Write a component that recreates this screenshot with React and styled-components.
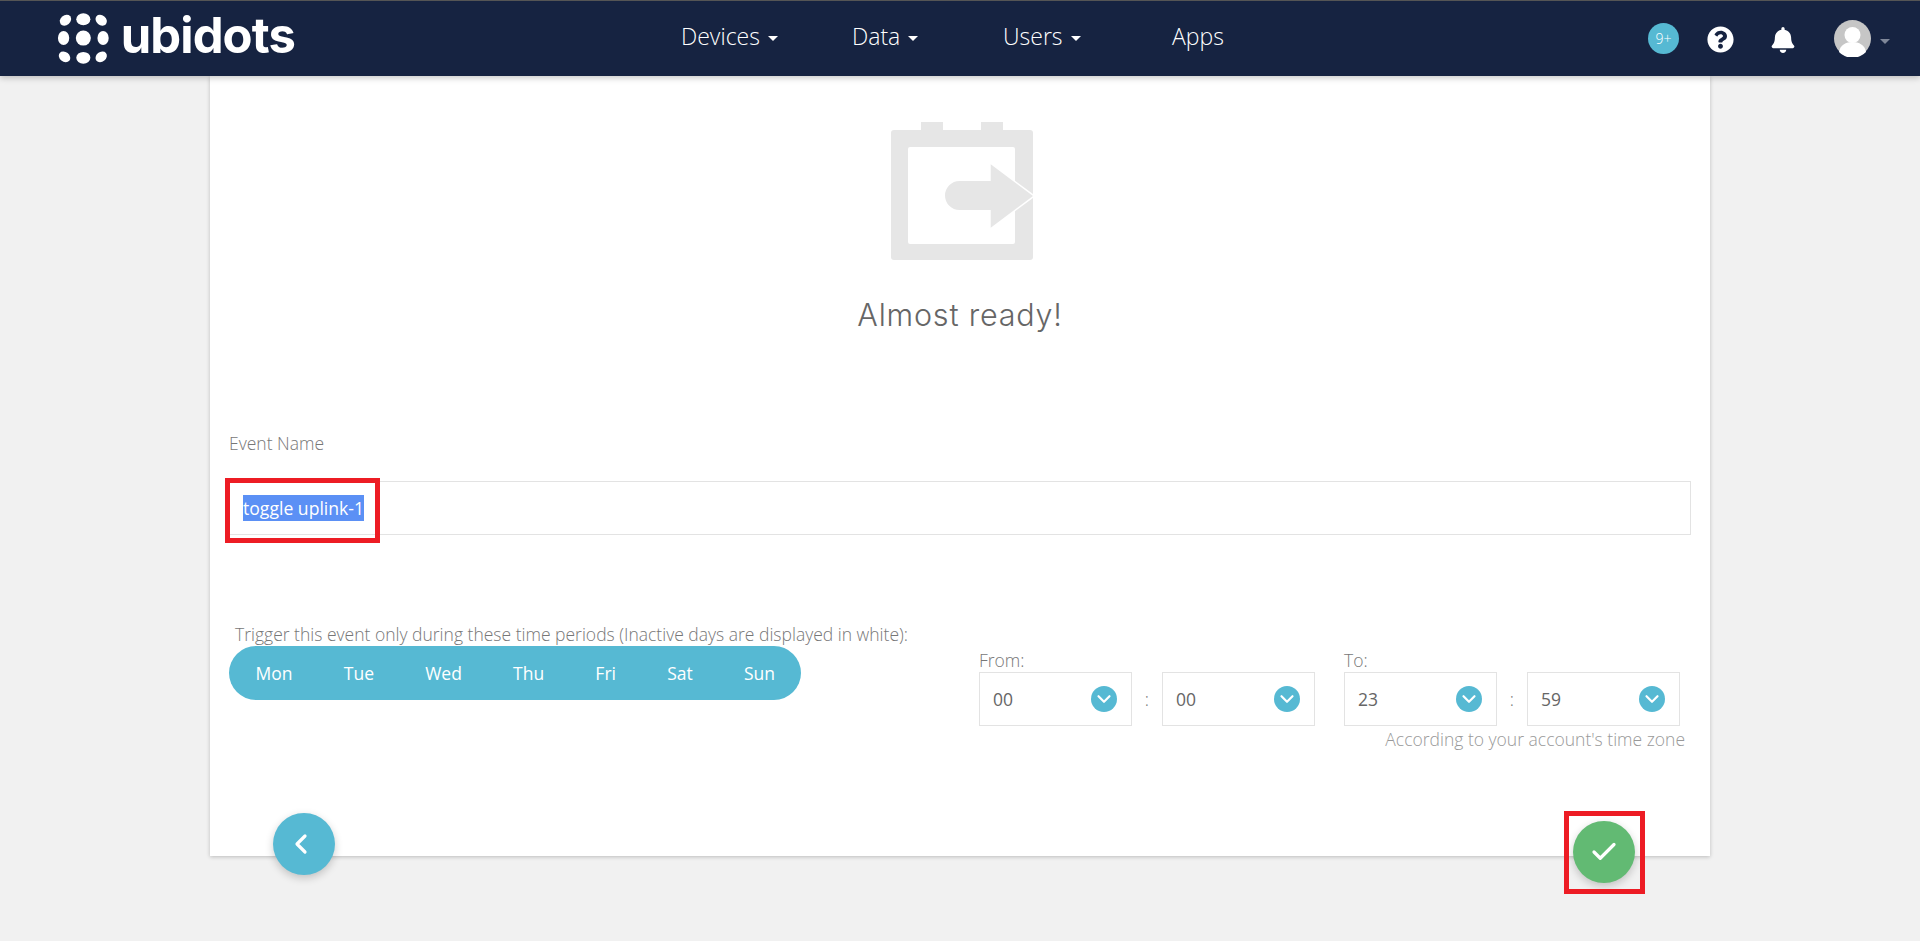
import React from "react";
import styled, { createGlobalStyle } from "styled-components";
import { ChevronDown, ChevronLeft, Check } from "lucide-react";
import { FaBell, FaQuestionCircle } from "react-icons/fa";

const Global = createGlobalStyle`
  html, body { margin: 0; padding: 0; background: #f1f1f1; }
  body { font-family: "Open Sans", "Liberation Sans", sans-serif; color: #666; }
  #root { height: 941px; overflow: hidden; }
  * { box-sizing: border-box; }
`;

const TopBar = styled.header`
  position: relative;
  z-index: 2;
  height: 76px;
  border-top: 1px solid #555;
  background: #162341;
  box-shadow: 0 2px 6px rgba(0, 0, 0, 0.22);
  display: flex;
  align-items: center;
  padding: 0 30px 0 57px;
`;
const Logo = styled.div`
  width: 238px;
  display: flex;
  align-items: center;
  gap: 11px;
  flex: none;
`;
const LogoText = styled.span`
  font-family: "Inter", sans-serif;
  font-weight: 650;
  font-size: 49px;
  line-height: 56px;
  letter-spacing: -0.9px;
  color: #fff;
  margin-top: -5px;
`;
const Menu = styled.nav`
  margin-left: 386px;
  display: grid;
  grid-template-columns: 171px 151px 169px auto;
  align-items: center;
  margin-top: -5px;
`;
const MenuItem = styled.a`
  color: #fff;
  font-weight: 300;
  font-size: 23px;
  display: flex;
  align-items: center;
  gap: 8px;
`;
const Caret = styled.i`
  width: 0;
  height: 0;
  margin-top: 5px;
  border-top: 5px solid ${(p) => p.$color || "#fff"};
  border-left: 5px solid transparent;
  border-right: 5px solid transparent;
`;
const Tools = styled.div`
  margin-left: auto;
  display: flex;
  align-items: center;
`;
const Badge = styled.span`
  width: 31px;
  height: 31px;
  border-radius: 50%;
  background: #56b9d3;
  color: #fff;
  font-size: 14px;
  font-weight: 300;
  display: flex;
  align-items: center;
  justify-content: center;
  margin-right: 28px;
`;
const ToolIcon = styled.span`
  color: #fff;
  display: flex;
  margin-top: 2px;
  margin-right: ${(p) => p.$gap}px;
`;
const Avatar = styled.svg`
  width: 37px;
  height: 37px;
  margin-right: 9px;
`;

const Card = styled.main`
  position: relative;
  width: 1500px;
  height: 780px;
  margin: 0 auto;
  padding: 45px 19px 0;
  background: #fff;
  box-shadow: 0 1px 4px rgba(0, 0, 0, 0.22);
`;
const Hero = styled.div`
  display: flex;
  flex-direction: column;
  align-items: center;
  gap: 34px;
`;
const HeroIcon = styled.svg`
  width: 144px;
  height: 140px;
  margin-left: 4px;
`;
const Heading = styled.h2`
  margin: 0;
  font-family: "Inter", sans-serif;
  font-weight: 300;
  font-size: 30.5px;
  line-height: 40px;
  letter-spacing: 0.8px;
  color: #666;
`;
const FieldLabel = styled.label`
  display: block;
  margin-top: 97px;
  font-weight: 300;
  font-size: 17.5px;
  line-height: 22px;
  color: #777;
`;
const InputBox = styled.div`
  position: relative;
  margin-top: 27px;
  height: 54px;
  border: 1px solid #e3e3e3;
  padding-left: 13px;
  display: flex;
  align-items: center;
`;
const Selected = styled.span`
  background: #5b90f5;
  color: #fff;
  font-size: 17.6px;
  line-height: 26px;
`;
const Marker = styled.div`
  position: absolute;
  left: ${(p) => p.$l}px;
  top: ${(p) => p.$t}px;
  width: ${(p) => p.$w}px;
  height: ${(p) => p.$h}px;
  border: 5px solid #ed1c24;
  pointer-events: none;
`;
const Schedule = styled.section`
  margin-top: 87px;
  display: flex;
  gap: 178px;
`;
const DaysColumn = styled.div`
  width: 572px;
  flex: none;
`;
const Hint = styled.p`
  margin: 0;
  padding-left: 6px;
  font-weight: 300;
  font-size: 17.5px;
  line-height: 24px;
  white-space: nowrap;
  color: #777;
`;
const DayPill = styled.div`
  height: 54px;
  border-radius: 27px;
  background: #56b9d3;
  padding: 0 1px;
  display: flex;
  align-items: center;
`;
const Day = styled.span`
  padding: 0 25.6px;
  color: #fff;
  font-size: 17.5px;
`;
const TimeColumn = styled.div`
  width: 706px;
  padding-top: 26px;
`;
const TimeGroups = styled.div`
  display: flex;
  gap: 29.5px;
`;
const TimeGroup = styled.div`
  width: 335.5px;
`;
const TimeLabel = styled.div`
  font-weight: 300;
  font-size: 17.5px;
  line-height: 24px;
  color: #777;
`;
const TimeRow = styled.div`
  display: flex;
  align-items: center;
`;
const Colon = styled.span`
  width: 30.5px;
  text-align: center;
  font-weight: 300;
  font-size: 17.5px;
  color: #777;
`;
const Select = styled.div`
  width: 152.5px;
  height: 54px;
  border: 1px solid #e3e3e3;
  padding: 0 14px 0 13px;
  display: flex;
  align-items: center;
  justify-content: space-between;
  font-size: 17.5px;
  color: #666;
`;
const SelectArrow = styled.span`
  width: 26px;
  height: 26px;
  border-radius: 50%;
  background: #56b9d3;
  color: #fff;
  display: flex;
  align-items: center;
  justify-content: center;
`;
const TimeNote = styled.p`
  margin: 1px 0 0;
  text-align: right;
  font-weight: 300;
  font-size: 17.5px;
  line-height: 24px;
  color: #999;
`;
const RoundButton = styled.button`
  position: absolute;
  left: ${(p) => p.$l}px;
  top: ${(p) => p.$t}px;
  width: 62px;
  height: 62px;
  border: 0;
  padding: 0;
  border-radius: 50%;
  background: ${(p) => p.$bg};
  color: #fff;
  display: flex;
  align-items: center;
  justify-content: center;
  box-shadow: 0 3px 8px rgba(0, 0, 0, 0.2);
`;
const BackGlyph = styled(ChevronLeft)`
  margin-right: 7px;
`;

const days = ["Mon", "Tue", "Wed", "Thu", "Fri", "Sat", "Sun"];

const TimeSelect = ({ value }) => (
  <Select>
    {value}
    <SelectArrow>
      <ChevronDown size={22} strokeWidth={2.4} />
    </SelectArrow>
  </Select>
);

const TimeRange = ({ label, a, b }) => (
  <TimeGroup>
    <TimeLabel>{label}</TimeLabel>
    <TimeRow>
      <TimeSelect value={a} />
      <Colon>:</Colon>
      <TimeSelect value={b} />
    </TimeRow>
  </TimeGroup>
);

export default function App() {
  return (
    <>
      <Global />
      <TopBar>
        <Logo>
          <svg width="56" height="56" viewBox="0 0 56 56" fill="#fff">
            <ellipse cx="9" cy="8" rx="5.2" ry="6.6" transform="rotate(50 9 8)" />
            <ellipse cx="28" cy="7" rx="7.5" ry="6.3" />
            <ellipse cx="47" cy="8" rx="5.2" ry="6.6" transform="rotate(-50 47 8)" />
            <ellipse cx="7" cy="27" rx="6" ry="7.5" />
            <ellipse cx="28" cy="27" rx="8" ry="8" />
            <ellipse cx="49" cy="27" rx="6" ry="7.5" />
            <ellipse cx="8" cy="47" rx="5.2" ry="6.6" transform="rotate(-50 8 47)" />
            <ellipse cx="28" cy="48" rx="7.5" ry="6.3" />
            <ellipse cx="47" cy="47" rx="5.2" ry="6.6" transform="rotate(50 47 47)" />
          </svg>
          <LogoText>ubidots</LogoText>
        </Logo>
        <Menu>
          <MenuItem>Devices <Caret /></MenuItem>
          <MenuItem>Data <Caret /></MenuItem>
          <MenuItem>Users <Caret /></MenuItem>
          <MenuItem>Apps</MenuItem>
        </Menu>
        <Tools>
          <Badge>9+</Badge>
          <ToolIcon $gap={36}><FaQuestionCircle size={27} /></ToolIcon>
          <ToolIcon $gap={38}><FaBell size={26} /></ToolIcon>
          <Avatar viewBox="0 0 37 37">
            <circle cx="18.5" cy="18.5" r="18.5" fill="#c6c6c6" />
            <circle cx="18.5" cy="15" r="8" fill="#fff" />
            <path d="M5 32c1-7 7-10 13.5-10S31 25 32 32a18.5 18.5 0 0 1-27 0z" fill="#fff" />
          </Avatar>
          <Caret $color="#7f8799" />
        </Tools>
      </TopBar>
      <Card>
        <Hero>
          <HeroIcon viewBox="0 0 144 140">
            <rect x="1" y="9" width="142" height="130" rx="3" fill="#e6e6e6" />
            <rect x="31" y="1" width="22" height="9" fill="#e6e6e6" />
            <rect x="91" y="1" width="22" height="9" fill="#e6e6e6" />
            <rect x="18" y="26" width="107" height="97" rx="2" fill="#fff" />
            <path
              d="M69.5 60H100.7V43.3L143 75L100.7 106.7V89H69.5a14.5 14.5 0 0 1 0-29z"
              fill="#e6e6e6"
              stroke="#fff"
              strokeWidth="3"
              paintOrder="stroke"
            />
          </HeroIcon>
          <Heading>Almost ready!</Heading>
        </Hero>
        <FieldLabel>Event Name</FieldLabel>
        <InputBox>
          <Selected>toggle uplink-1</Selected>
          <Marker $l={-5} $t={-4} $w={155} $h={65} />
        </InputBox>
        <Schedule>
          <DaysColumn>
            <Hint>Trigger this event only during these time periods (Inactive days are displayed in white):</Hint>
            <DayPill>
              {days.map((d) => <Day key={d}>{d}</Day>)}
            </DayPill>
          </DaysColumn>
          <TimeColumn>
            <TimeGroups>
              <TimeRange label="From:" a="00" b="00" />
              <TimeRange label="To:" a="23" b="59" />
            </TimeGroups>
            <TimeNote>According to your account's time zone</TimeNote>
          </TimeColumn>
        </Schedule>
        <RoundButton $l={63} $t={737} $bg="#56b9d3">
          <BackGlyph size={32} strokeWidth={2.4} />
        </RoundButton>
        <RoundButton $l={1363} $t={745} $bg="#62ba73">
          <Check size={30} strokeWidth={2.6} />
          <Marker $l={-9} $t={-10} $w={81} $h={83} />
        </RoundButton>
      </Card>
    </>
  );
}
